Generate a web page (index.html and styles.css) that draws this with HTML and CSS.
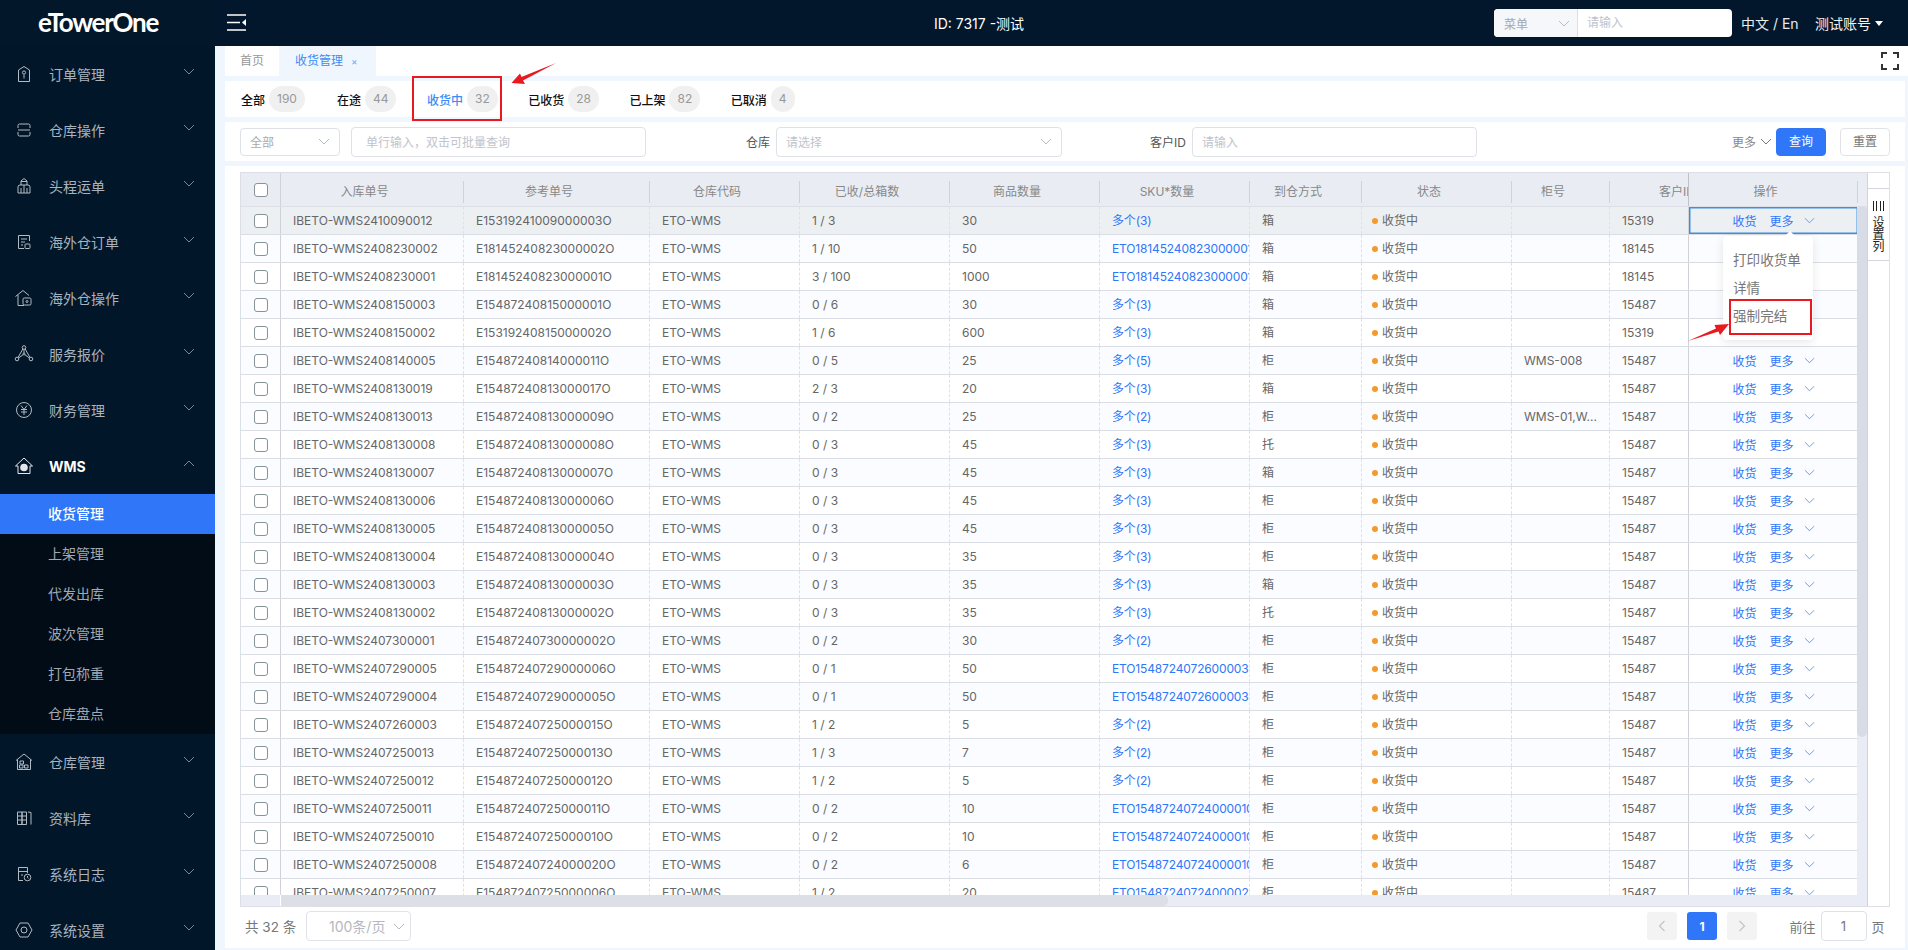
FILE: index.html
```html
<!DOCTYPE html>
<html lang="zh">
<head>
<meta charset="utf-8">
<title>收货管理</title>
<link rel="stylesheet" href="styles.css">
</head>
<body>
<aside class="side-nav">
  <div class="logo"><span class="logo-text">eTowerOne</span></div>
  <nav>
    <div class="nav-item"><svg class="nav-ico" viewBox="0 0 20 20"><path d="M4.500 6 10 2.500 15.500 6v11.500h-11z"/><circle cx="10" cy="8.500" r="1.600"/><path d="M10 10.500v4"/></svg><span class="nav-label">订单管理</span><svg class="nav-chev" viewBox="0 0 12 7"><path d="M1 1l5 5 5-5"/></svg></div>
    <div class="nav-item"><svg class="nav-ico" viewBox="0 0 20 20"><path d="M4 8V5.500Q4 4 5.500 4h9Q16 4 16 5.500V8M4 10h12M4 12v2.500Q4 16 5.500 16h9q1.500 0 1.500-1.500V12"/></svg><span class="nav-label">仓库操作</span><svg class="nav-chev" viewBox="0 0 12 7"><path d="M1 1l5 5 5-5"/></svg></div>
    <div class="nav-item"><svg class="nav-ico" viewBox="0 0 20 20"><path d="M7 9V5l3-2.500L13 5v4M4 17v-6q0-2 2-2h8q2 0 2 2v6zM7 5.500h6M10 9v8M7 12v5M13 12v5"/></svg><span class="nav-label">头程运单</span><svg class="nav-chev" viewBox="0 0 12 7"><path d="M1 1l5 5 5-5"/></svg></div>
    <div class="nav-item"><svg class="nav-ico" viewBox="0 0 20 20"><path d="M10 16.500H4.500v-13h11V9M7 7h6M7 10h4M7 13h2"/><rect x="11" y="12" width="5" height="4.500" rx=".8"/></svg><span class="nav-label">海外仓订单</span><svg class="nav-chev" viewBox="0 0 12 7"><path d="M1 1l5 5 5-5"/></svg></div>
    <div class="nav-item"><svg class="nav-ico" viewBox="0 0 20 20"><path d="M1.500 8.500 9 2.500l6 5M4 7v10.500h6"/><rect x="9" y="10" width="8" height="7" rx="1.200"/><circle cx="13" cy="13.500" r="1"/></svg><span class="nav-label">海外仓操作</span><svg class="nav-chev" viewBox="0 0 12 7"><path d="M1 1l5 5 5-5"/></svg></div>
    <div class="nav-item"><svg class="nav-ico" viewBox="0 0 20 20"><circle cx="10" cy="3.500" r="1.800"/><circle cx="3" cy="15" r="1.800"/><circle cx="17" cy="15" r="1.800"/><circle cx="10" cy="10" r="1"/><path d="M10 5.500V9M4.600 14l4.500-3.300M15.400 14l-4.500-3.300M9 4.800 4 13.500M11 4.800l5 8.700"/></svg><span class="nav-label">服务报价</span><svg class="nav-chev" viewBox="0 0 12 7"><path d="M1 1l5 5 5-5"/></svg></div>
    <div class="nav-item"><svg class="nav-ico" viewBox="0 0 20 20"><circle cx="10" cy="10" r="7.500"/><path d="M7 5.500l3 4 3-4M10 9.500V15M7 9.500h6M7 12h6"/></svg><span class="nav-label">财务管理</span><svg class="nav-chev" viewBox="0 0 12 7"><path d="M1 1l5 5 5-5"/></svg></div>
    <div class="nav-item nav-open"><svg class="nav-ico ico-wms" viewBox="0 0 20 20"><path d="M1.500 10 10 2l8.500 8H16v7.500H4V10z"/><circle cx="10" cy="11.500" r="3.800" class="ico-fill"/></svg><span class="nav-label">WMS</span><svg class="nav-chev" viewBox="0 0 12 7"><path d="M1 6l5-5 5 5"/></svg></div>
    <ul class="sub-menu">
      <li class="sub-active">收货管理</li>
      <li>上架管理</li>
      <li>代发出库</li>
      <li>波次管理</li>
      <li>打包称重</li>
      <li>仓库盘点</li>
    </ul>
    <div class="nav-item"><svg class="nav-ico" viewBox="0 0 20 20"><path d="M2 8.500 10 2l8 6.500M3.500 7.500v10h13v-10"/><rect x="6" y="9" width="3.500" height="3"/><rect x="5.500" y="13" width="3.500" height="3"/><rect x="10.500" y="13" width="3.500" height="3"/></svg><span class="nav-label">仓库管理</span><svg class="nav-chev" viewBox="0 0 12 7"><path d="M1 1l5 5 5-5"/></svg></div>
    <div class="nav-item"><svg class="nav-ico" viewBox="0 0 20 20"><path d="M3.500 4h4.500v12.500H3.500zM8 4h4.500v12.500H8zM3.500 8h9M3.500 12h9M14 4l3 .5v12"/></svg><span class="nav-label">资料库</span><svg class="nav-chev" viewBox="0 0 12 7"><path d="M1 1l5 5 5-5"/></svg></div>
    <div class="nav-item"><svg class="nav-ico" viewBox="0 0 20 20"><path d="M9 16.500H4.500v-13h9V9M4.500 7.500h9M7 11h2"/><circle cx="13.500" cy="13.500" r="3.300"/><path d="M13.500 12v1.500l1 .8"/></svg><span class="nav-label">系统日志</span><svg class="nav-chev" viewBox="0 0 12 7"><path d="M1 1l5 5 5-5"/></svg></div>
    <div class="nav-item"><svg class="nav-ico" viewBox="0 0 20 20"><path d="M6 3h8l4 7-4 7H6l-4-7z"/><circle cx="10" cy="10" r="3"/></svg><span class="nav-label">系统设置</span><svg class="nav-chev" viewBox="0 0 12 7"><path d="M1 1l5 5 5-5"/></svg></div>
  </nav>
</aside>

<div class="right">
  <header class="topbar">
    <svg class="toggle" viewBox="0 0 19 17"><path d="M0 1h19M0 8.500h13M0 16h19"/><path class="toggle-tip" d="M19 5v7l-4-3.500z"/></svg>
    <div class="top-title">ID: 7317 -测试</div>
    <div class="top-search"><span class="ts-select">菜单<svg class="chev" viewBox="0 0 12 7"><path d="M1 1l5 5 5-5"/></svg></span><span class="ts-input">请输入</span></div>
    <div class="top-lang">中文 / En</div>
    <div class="top-user">测试账号<i class="caret"></i></div>
  </header>

  <main class="content">
    <div class="tabbar">
      <span class="tab">首页</span>
      <span class="tab tab-on">收货管理<em>×</em></span>
      <svg class="fs" viewBox="0 0 18 18"><path d="M1 6V1h5M12 1h5v5M1 12v5h5M17 12v5h-5"/></svg>
    </div>

    <div class="status-row">
      <span class="st">全部<b>190</b></span>
      <span class="st">在途<b>44</b></span>
      <span class="st st-on">收货中<b>32</b></span>
      <span class="st">已收货<b>28</b></span>
      <span class="st">已上架<b>82</b></span>
      <span class="st">已取消<b>4</b></span>
    </div>

    <div class="filter-row">
      <span class="fld f-type">全部<svg class="chev" viewBox="0 0 12 7"><path d="M1 1l5 5 5-5"/></svg></span>
      <span class="fld f-no">单行输入，双击可批量查询</span>
      <label class="f-lab l-wh">仓库</label>
      <span class="fld f-wide">请选择<svg class="chev" viewBox="0 0 12 7"><path d="M1 1l5 5 5-5"/></svg></span>
      <label class="f-lab l-cu">客户ID</label>
      <span class="fld f-wide">请输入</span>
      <div class="f-actions">
        <span class="f-more">更多<svg class="chev" viewBox="0 0 12 7"><path d="M1 1l5 5 5-5"/></svg></span>
        <span class="btn btn-pri">查询</span>
        <span class="btn">重置</span>
      </div>
    </div>

    <section class="card">
      <div class="table">
        <div class="t-main">
          <div class="row head"><div class="cc"><i class="box"></i></div><div class="mid"><span>入库单号</span><span>参考单号</span><span>仓库代码</span><span>已收/总箱数</span><span>商品数量</span><span>SKU*数量</span><span>到仓方式</span><span>状态</span><span>柜号</span><span>客户ID</span></div><div class="op"><span>操作</span></div></div>
          <div class="body">
<div class="row hover"><div class="cc"><i class="box"></i></div><div class="mid"><span>IBETO-WMS2410090012</span><span>E15319241009000003O</span><span>ETO-WMS</span><span>1 / 3</span><span>30</span><span class="lk">多个(3)</span><span>箱</span><span class="s">收货中</span><span></span><span>15319</span></div><div class="op op-sel"><a>收货</a><a>更多</a><svg class="chev" viewBox="0 0 12 7"><path d="M1 1l5 5 5-5"/></svg></div></div>
<div class="row"><div class="cc"><i class="box"></i></div><div class="mid"><span>IBETO-WMS2408230002</span><span>E18145240823000002O</span><span>ETO-WMS</span><span>1 / 10</span><span>50</span><span class="lk">ETO18145240823000001</span><span>箱</span><span class="s">收货中</span><span></span><span>18145</span></div><div class="op"></div></div>
<div class="row"><div class="cc"><i class="box"></i></div><div class="mid"><span>IBETO-WMS2408230001</span><span>E18145240823000001O</span><span>ETO-WMS</span><span>3 / 100</span><span>1000</span><span class="lk">ETO18145240823000001</span><span>箱</span><span class="s">收货中</span><span></span><span>18145</span></div><div class="op"></div></div>
<div class="row"><div class="cc"><i class="box"></i></div><div class="mid"><span>IBETO-WMS2408150003</span><span>E15487240815000001O</span><span>ETO-WMS</span><span>0 / 6</span><span>30</span><span class="lk">多个(3)</span><span>箱</span><span class="s">收货中</span><span></span><span>15487</span></div><div class="op"></div></div>
<div class="row"><div class="cc"><i class="box"></i></div><div class="mid"><span>IBETO-WMS2408150002</span><span>E15319240815000002O</span><span>ETO-WMS</span><span>1 / 6</span><span>600</span><span class="lk">多个(3)</span><span>箱</span><span class="s">收货中</span><span></span><span>15319</span></div><div class="op"></div></div>
<div class="row"><div class="cc"><i class="box"></i></div><div class="mid"><span>IBETO-WMS2408140005</span><span>E15487240814000011O</span><span>ETO-WMS</span><span>0 / 5</span><span>25</span><span class="lk">多个(5)</span><span>柜</span><span class="s">收货中</span><span>WMS-008</span><span>15487</span></div><div class="op"><a>收货</a><a>更多</a><svg class="chev" viewBox="0 0 12 7"><path d="M1 1l5 5 5-5"/></svg></div></div>
<div class="row"><div class="cc"><i class="box"></i></div><div class="mid"><span>IBETO-WMS2408130019</span><span>E15487240813000017O</span><span>ETO-WMS</span><span>2 / 3</span><span>20</span><span class="lk">多个(3)</span><span>箱</span><span class="s">收货中</span><span></span><span>15487</span></div><div class="op"><a>收货</a><a>更多</a><svg class="chev" viewBox="0 0 12 7"><path d="M1 1l5 5 5-5"/></svg></div></div>
<div class="row"><div class="cc"><i class="box"></i></div><div class="mid"><span>IBETO-WMS2408130013</span><span>E15487240813000009O</span><span>ETO-WMS</span><span>0 / 2</span><span>25</span><span class="lk">多个(2)</span><span>柜</span><span class="s">收货中</span><span>WMS-01,W...</span><span>15487</span></div><div class="op"><a>收货</a><a>更多</a><svg class="chev" viewBox="0 0 12 7"><path d="M1 1l5 5 5-5"/></svg></div></div>
<div class="row"><div class="cc"><i class="box"></i></div><div class="mid"><span>IBETO-WMS2408130008</span><span>E15487240813000008O</span><span>ETO-WMS</span><span>0 / 3</span><span>45</span><span class="lk">多个(3)</span><span>托</span><span class="s">收货中</span><span></span><span>15487</span></div><div class="op"><a>收货</a><a>更多</a><svg class="chev" viewBox="0 0 12 7"><path d="M1 1l5 5 5-5"/></svg></div></div>
<div class="row"><div class="cc"><i class="box"></i></div><div class="mid"><span>IBETO-WMS2408130007</span><span>E15487240813000007O</span><span>ETO-WMS</span><span>0 / 3</span><span>45</span><span class="lk">多个(3)</span><span>箱</span><span class="s">收货中</span><span></span><span>15487</span></div><div class="op"><a>收货</a><a>更多</a><svg class="chev" viewBox="0 0 12 7"><path d="M1 1l5 5 5-5"/></svg></div></div>
<div class="row"><div class="cc"><i class="box"></i></div><div class="mid"><span>IBETO-WMS2408130006</span><span>E15487240813000006O</span><span>ETO-WMS</span><span>0 / 3</span><span>45</span><span class="lk">多个(3)</span><span>柜</span><span class="s">收货中</span><span></span><span>15487</span></div><div class="op"><a>收货</a><a>更多</a><svg class="chev" viewBox="0 0 12 7"><path d="M1 1l5 5 5-5"/></svg></div></div>
<div class="row"><div class="cc"><i class="box"></i></div><div class="mid"><span>IBETO-WMS2408130005</span><span>E15487240813000005O</span><span>ETO-WMS</span><span>0 / 3</span><span>45</span><span class="lk">多个(3)</span><span>柜</span><span class="s">收货中</span><span></span><span>15487</span></div><div class="op"><a>收货</a><a>更多</a><svg class="chev" viewBox="0 0 12 7"><path d="M1 1l5 5 5-5"/></svg></div></div>
<div class="row"><div class="cc"><i class="box"></i></div><div class="mid"><span>IBETO-WMS2408130004</span><span>E15487240813000004O</span><span>ETO-WMS</span><span>0 / 3</span><span>35</span><span class="lk">多个(3)</span><span>柜</span><span class="s">收货中</span><span></span><span>15487</span></div><div class="op"><a>收货</a><a>更多</a><svg class="chev" viewBox="0 0 12 7"><path d="M1 1l5 5 5-5"/></svg></div></div>
<div class="row"><div class="cc"><i class="box"></i></div><div class="mid"><span>IBETO-WMS2408130003</span><span>E15487240813000003O</span><span>ETO-WMS</span><span>0 / 3</span><span>35</span><span class="lk">多个(3)</span><span>箱</span><span class="s">收货中</span><span></span><span>15487</span></div><div class="op"><a>收货</a><a>更多</a><svg class="chev" viewBox="0 0 12 7"><path d="M1 1l5 5 5-5"/></svg></div></div>
<div class="row"><div class="cc"><i class="box"></i></div><div class="mid"><span>IBETO-WMS2408130002</span><span>E15487240813000002O</span><span>ETO-WMS</span><span>0 / 3</span><span>35</span><span class="lk">多个(3)</span><span>托</span><span class="s">收货中</span><span></span><span>15487</span></div><div class="op"><a>收货</a><a>更多</a><svg class="chev" viewBox="0 0 12 7"><path d="M1 1l5 5 5-5"/></svg></div></div>
<div class="row"><div class="cc"><i class="box"></i></div><div class="mid"><span>IBETO-WMS2407300001</span><span>E15487240730000002O</span><span>ETO-WMS</span><span>0 / 2</span><span>30</span><span class="lk">多个(2)</span><span>柜</span><span class="s">收货中</span><span></span><span>15487</span></div><div class="op"><a>收货</a><a>更多</a><svg class="chev" viewBox="0 0 12 7"><path d="M1 1l5 5 5-5"/></svg></div></div>
<div class="row"><div class="cc"><i class="box"></i></div><div class="mid"><span>IBETO-WMS2407290005</span><span>E15487240729000006O</span><span>ETO-WMS</span><span>0 / 1</span><span>50</span><span class="lk">ETO15487240726000030</span><span>柜</span><span class="s">收货中</span><span></span><span>15487</span></div><div class="op"><a>收货</a><a>更多</a><svg class="chev" viewBox="0 0 12 7"><path d="M1 1l5 5 5-5"/></svg></div></div>
<div class="row"><div class="cc"><i class="box"></i></div><div class="mid"><span>IBETO-WMS2407290004</span><span>E15487240729000005O</span><span>ETO-WMS</span><span>0 / 1</span><span>50</span><span class="lk">ETO15487240726000030</span><span>柜</span><span class="s">收货中</span><span></span><span>15487</span></div><div class="op"><a>收货</a><a>更多</a><svg class="chev" viewBox="0 0 12 7"><path d="M1 1l5 5 5-5"/></svg></div></div>
<div class="row"><div class="cc"><i class="box"></i></div><div class="mid"><span>IBETO-WMS2407260003</span><span>E15487240725000015O</span><span>ETO-WMS</span><span>1 / 2</span><span>5</span><span class="lk">多个(2)</span><span>柜</span><span class="s">收货中</span><span></span><span>15487</span></div><div class="op"><a>收货</a><a>更多</a><svg class="chev" viewBox="0 0 12 7"><path d="M1 1l5 5 5-5"/></svg></div></div>
<div class="row"><div class="cc"><i class="box"></i></div><div class="mid"><span>IBETO-WMS2407250013</span><span>E15487240725000013O</span><span>ETO-WMS</span><span>1 / 3</span><span>7</span><span class="lk">多个(2)</span><span>柜</span><span class="s">收货中</span><span></span><span>15487</span></div><div class="op"><a>收货</a><a>更多</a><svg class="chev" viewBox="0 0 12 7"><path d="M1 1l5 5 5-5"/></svg></div></div>
<div class="row"><div class="cc"><i class="box"></i></div><div class="mid"><span>IBETO-WMS2407250012</span><span>E15487240725000012O</span><span>ETO-WMS</span><span>1 / 2</span><span>5</span><span class="lk">多个(2)</span><span>柜</span><span class="s">收货中</span><span></span><span>15487</span></div><div class="op"><a>收货</a><a>更多</a><svg class="chev" viewBox="0 0 12 7"><path d="M1 1l5 5 5-5"/></svg></div></div>
<div class="row"><div class="cc"><i class="box"></i></div><div class="mid"><span>IBETO-WMS2407250011</span><span>E15487240725000011O</span><span>ETO-WMS</span><span>0 / 2</span><span>10</span><span class="lk">ETO15487240724000010</span><span>柜</span><span class="s">收货中</span><span></span><span>15487</span></div><div class="op"><a>收货</a><a>更多</a><svg class="chev" viewBox="0 0 12 7"><path d="M1 1l5 5 5-5"/></svg></div></div>
<div class="row"><div class="cc"><i class="box"></i></div><div class="mid"><span>IBETO-WMS2407250010</span><span>E15487240725000010O</span><span>ETO-WMS</span><span>0 / 2</span><span>10</span><span class="lk">ETO15487240724000010</span><span>柜</span><span class="s">收货中</span><span></span><span>15487</span></div><div class="op"><a>收货</a><a>更多</a><svg class="chev" viewBox="0 0 12 7"><path d="M1 1l5 5 5-5"/></svg></div></div>
<div class="row"><div class="cc"><i class="box"></i></div><div class="mid"><span>IBETO-WMS2407250008</span><span>E15487240724000020O</span><span>ETO-WMS</span><span>0 / 2</span><span>6</span><span class="lk">ETO15487240724000010</span><span>柜</span><span class="s">收货中</span><span></span><span>15487</span></div><div class="op"><a>收货</a><a>更多</a><svg class="chev" viewBox="0 0 12 7"><path d="M1 1l5 5 5-5"/></svg></div></div>
<div class="row"><div class="cc"><i class="box"></i></div><div class="mid"><span>IBETO-WMS2407250007</span><span>E15487240725000006O</span><span>ETO-WMS</span><span>1 / 2</span><span>20</span><span class="lk">ETO15487240724000020</span><span>柜</span><span class="s">收货中</span><span></span><span>15487</span></div><div class="op"><a>收货</a><a>更多</a><svg class="chev" viewBox="0 0 12 7"><path d="M1 1l5 5 5-5"/></svg></div></div>
          </div>
          <div class="sb-x"><i class="sb-x-left"></i><i class="sb-x-thumb"></i></div>
          <div class="sb-y"><i class="sb-y-thumb"></i></div>
        </div>
        <div class="t-side">
          <div class="side-head"></div>
          <div class="side-btn"><i class="bars"></i><span>设</span><span>置</span><span>列</span></div>
        </div>
      </div>

      <div class="pager">
        <span class="pg-total">共 32 条</span>
        <span class="pg-size">100条/页<svg class="chev" viewBox="0 0 12 7"><path d="M1 1l5 5 5-5"/></svg></span>
        <span class="pg-btn"><svg viewBox="0 0 8 12"><path d="M6.500 1 1.500 6l5 5"/></svg></span>
        <span class="pg-btn pg-on">1</span>
        <span class="pg-btn"><svg viewBox="0 0 8 12"><path d="M1.500 1l5 5-5 5"/></svg></span>
        <span class="pg-go">前往</span>
        <span class="pg-input">1</span>
        <span class="pg-unit">页</span>
      </div>
    </section>
  </main>
</div>

<div class="popup">
  <div>打印收货单</div>
  <div>详情</div>
  <div>强制完结</div>
</div>
<div class="mark mark-tab"></div>
<div class="mark mark-item"></div>
<svg class="arrows" viewBox="0 0 1908 950">
  <path d="M556 63 523 80.500 525 84 511.500 83 520 73.500 521.500 77z"/>
  <path d="M1688 341 1716 328.500 1714.500 325 1729 324 1720 335 1718.500 331.500z"/>
</svg>
</body>
</html>
```
FILE: styles.css
```css
* { box-sizing: border-box; }
html, body { margin: 0; height: 950px; overflow: hidden; }
body {
  display: flex;
  font-family: Inter, "Noto Sans CJK SC", sans-serif;
  font-size: 12px;
  color: #666;
  background: #f0f6fd;
}

/* side nav */
.side-nav { flex: 0 0 215px; height: 950px; background: #021629; overflow: hidden; }
.logo { height: 46px; background: #03172a; padding: 4px 0 0 38px; }
.logo-text { font-family: Lato, sans-serif; font-weight: 700; font-size: 26px; letter-spacing: -1.300px; color: #fff; line-height: 36px; }
.nav-item { height: 56px; display: flex; align-items: center; padding: 0 20px 0 14px; color: #aab3bd; font-size: 14px; }
.nav-ico { width: 20px; height: 20px; flex: none; fill: none; stroke: #b3bac2; stroke-width: 1; stroke-linejoin: round; }
.nav-label { margin-left: 15px; flex: 1; }
.nav-chev { width: 12px; height: 7px; flex: none; margin-top: -6px; fill: none; stroke: #7d8894; stroke-width: 1; }
.nav-open { color: #fff; }
.nav-open .nav-label { font-weight: 700; }
.ico-wms { stroke: #e3e6ea; }
.ico-fill { fill: #e3e6ea; stroke: none; }
.sub-menu { list-style: none; margin: 0; padding: 0; background: #020c16; }
.sub-menu li { height: 40px; line-height: 40px; padding-left: 48px; font-size: 14px; color: #a0a8b1; }
.sub-menu .sub-active { background: #2f76f8; color: #fff; font-weight: 500; }

/* right */
.right { flex: 1; min-width: 0; display: flex; flex-direction: column; }
.topbar { height: 46px; background: #02162c; display: flex; align-items: center; color: #e8eaed; flex: none; }
.toggle { width: 19px; height: 17px; margin: -1px 0 0 12px; flex: none; fill: none; stroke: #fff; stroke-width: 1.500; }
.toggle-tip { fill: #fff; stroke: none; }
.top-title { flex: 1; text-align: center; font-size: 14px; color: #fff; padding-left: 218px; }
.top-search { width: 238px; height: 28px; background: #fff; border-radius: 4px; display: flex; flex: none; color: #bbb; }
.ts-select { width: 84px; background: #f5f7fa; border-right: 1px solid #dcdfe6; border-radius: 4px 0 0 4px; padding-left: 10px; display: flex; align-items: center; color: #a5a8ae; }
.ts-select .chev { margin-left: 30px; }
.ts-input { padding-left: 9px; line-height: 28px; color: #c0c4cc; }
.top-lang { width: 83px; padding-left: 9px; font-size: 14px; flex: none; }
.top-user { width: 93px; font-size: 14px; flex: none; display: flex; align-items: center; color: #f2f3f5; }
.caret { margin-left: 4px; border-style: solid; border-width: 5px 4px 0; border-color: #fff transparent transparent; }
.chev { width: 12px; height: 7px; flex: none; fill: none; stroke: #b6bbc4; stroke-width: 1; }

.content { flex: 1; min-height: 0; padding-left: 10px; display: flex; flex-direction: column; }
.tabbar { height: 30px; background: #fff; display: flex; align-items: center; flex: none; margin-bottom: 5px; }
.tab { height: 30px; line-height: 30px; padding: 0 15px; color: #999; }
.tab-on { background: #f0f6fd; color: #3b8cf5; padding: 0 15px 0 16px; width: 97px; white-space: nowrap; }
.tab-on em { font-style: normal; font-size: 10px; color: #70a8ef; margin-left: 8px; }
.fs { width: 18px; height: 18px; margin: 0 9px 0 auto; fill: none; stroke: #333; stroke-width: 2; }

.status-row { height: 36px; background: #fff; margin: 0 3px 5px 0; padding-left: 16px; display: flex; align-items: center; gap: 30.500px; flex: none; }
.st { display: flex; align-items: center; color: #111; font-weight: 500; }
.st:first-child { margin-right: 1.500px; }
.st b { height: 26px; line-height: 26px; padding: 0 8px; margin-left: 4px; border-radius: 13px; background: #f0f0f0; color: #999; font-weight: 400; }
.st-on { color: #3b8cf5; }

.filter-row { height: 39px; background: #fff; margin: 0 3px 5px 0; padding: 0 15px; display: flex; align-items: center; flex: none; }
.fld { height: 30px; border: 1px solid #dfe1e8; border-radius: 4px; padding: 0 9px; display: flex; align-items: center; justify-content: space-between; color: #c0c4cc; flex: none; }
.f-type { width: 100px; height: 28px; margin-right: 11px; color: #aaa; }
.f-no { width: 295px; padding: 0 14px; }
.f-wide { width: 286px; }
.f-wide:last-of-type { width: 285px; }
.f-lab { color: #555; margin-right: 6px; flex: none; }
.l-wh { margin-left: 100px; }
.l-cu { margin-left: 88px; }
.f-actions { margin-left: auto; display: flex; align-items: center; }
.f-more { color: #888; display: flex; align-items: center; gap: 4px; margin-right: 4px; }
.f-more .chev { stroke: #777; }
.btn { width: 50px; height: 28px; line-height: 26px; text-align: center; border: 1px solid #e1e3e8; border-radius: 4px; color: #777; margin-left: 14px; }
.btn-pri { background: #2f76f8; border-color: #2f76f8; color: #fff; margin-left: 0; }

.card { flex: none; height: 782px; background: #fff; margin-right: 3px; padding: 6px 15px 0; display: flex; flex-direction: column; }
.table { height: 735px; display: flex; border: 1px solid #dcdfe6; flex: none; position: relative; }
.t-main { width: 1627px; flex: none; position: relative; border-right: 1px solid #cfd3da; }
.body { height: 689px; overflow: hidden; }
.row { display: flex; height: 28px; border-bottom: 1px solid #dadde3; background: #fff; }
.row:nth-child(even) { background: #fafcff; }
.row.hover { background: #edf0f2; }
.cc { flex: 0 0 40px; display: flex; align-items: center; justify-content: center; border-right: 1.500px solid #cfd2d6; }
.box { width: 14px; height: 14px; border: 1px solid #869397; border-radius: 3px; background: #fff; }
.mid { flex: 0 0 1407px; display: grid; grid-template-columns: 183px 186px 150px 150px 150px 150px 112px 150px 98px 150px; overflow: hidden; }
.mid span { padding-left: 12px; line-height: 27px; white-space: nowrap; overflow: hidden; border-right: 1px dashed #e0e1e4; color: #666; }
.mid .lk { color: #2f76f8; letter-spacing: -.15px; }
.mid .s::before { content: ""; display: inline-block; width: 6px; height: 6px; border-radius: 50%; background: #f39a2e; margin: 0 4px 1px -2px; vertical-align: middle; }
.op { flex: 0 0 170px; display: flex; align-items: center; justify-content: center; border-left: 1.500px solid #cfd2d6; gap: 13px; }
.op a { color: #2f76f8; }
.op .chev { margin-left: -3px; stroke: #5c95f5; width: 11px; }
.op-sel { box-shadow: inset 0 0 0 1.500px #3d8fe0; }
.head { height: 34px; background: #e9edf3; border-bottom: 1px solid #dcdfe6; }
.head .mid { align-items: center; }
.head .mid span { padding: 0 15px 0 0; height: 22px; line-height: 22px; margin-top: 4px; text-align: center; border-right: 1px solid #cfd2d6; color: #888; }
.head .op { border-left: 1.500px solid #bfc2c7; }
.head .op span { color: #888; flex: 1; text-align: center; height: 22px; line-height: 22px; margin-top: 4px; border-right: 1px solid #cfd2d6; padding-right: 15px; }

.sb-x { position: absolute; left: 0; right: 0; bottom: 0; height: 11px; background: #e9ecf5; }
.sb-x-left { position: absolute; left: 39px; width: 1px; top: 0; bottom: 0; background: #fff; }
.sb-x-thumb { position: absolute; left: 40px; width: 887px; top: 0; bottom: 0; background: #dcdfe6; border-radius: 0 5px 5px 0; }
.sb-y { position: absolute; right: 0; top: 34px; bottom: 11px; width: 10px; background: #e9ecf5; }
.sb-y-thumb { position: absolute; left: 0; right: 0; top: 0; height: 530px; background: #d8dce6; border-radius: 3px 3px 5px 5px; }

.t-side { flex: 1; display: flex; flex-direction: column; }
.side-head { height: 16px; border-bottom: 1px solid #d4d7dd; }
.side-btn { height: 72px; border-bottom: 1px solid #d4d7dd; display: flex; flex-direction: column; align-items: center; color: #222; font-size: 12px; line-height: 12px; padding-top: 12px; }
.bars { width: 11px; height: 10px; margin-bottom: 6px; flex: none; background: repeating-linear-gradient(90deg, #222 0 1px, transparent 1px 3.300px); }

.pager { flex: 1; display: flex; align-items: center; padding: 0 0 3px 5px; color: #777; }
.pg-total { font-size: 13.500px; width: 51px; margin-right: 10px; white-space: nowrap; }
.pg-size { width: 105px; height: 30px; border: 1px solid #e1e3e8; border-radius: 4px; display: flex; align-items: center; justify-content: space-between; padding: 0 5px 0 22px; font-size: 14px; color: #b5b8be; margin-right: 1236px; }
.pg-btn { width: 30px; height: 28px; background: #f3f3f4; border-radius: 3px; margin-right: 10px; display: flex; align-items: center; justify-content: center; font-weight: 700; flex: none; }
.pg-btn svg { width: 8px; height: 12px; fill: none; stroke: #c0c4cc; stroke-width: 1.200; }
.pg-on { background: #2f76f8; color: #fff; }
.pg-go { margin-left: 22.500px; font-size: 13px; }
.pg-input { width: 46px; height: 30px; border: 1px solid #dfe1e8; border-radius: 4px; margin: 0 5px; display: flex; align-items: center; justify-content: center; font-size: 13px; }
.pg-unit { font-size: 13px; }

/* overlays */
.popup { position: absolute; left: 1723px; top: 236px; width: 90px; height: 104px; background: #fff; border-radius: 4px; box-shadow: 0 2px 10px rgba(0,0,0,.1); padding: 10px 0 0 10px; font-size: 13.600px; color: #777; }
.popup div { height: 28px; line-height: 28px; white-space: nowrap; }
.popup::before { content: ""; position: absolute; left: 62px; top: -5px; border-style: solid; border-width: 0 5px 5px; border-color: transparent transparent #fff; }
.mark { position: absolute; border: 2px solid #e8191f; }
.mark-tab { left: 412px; top: 76px; width: 90px; height: 45px; }
.mark-item { left: 1729px; top: 299px; width: 83px; height: 36px; }
.arrows { position: absolute; left: 0; top: 0; width: 1908px; height: 950px; pointer-events: none; fill: #e8191f; }
```
